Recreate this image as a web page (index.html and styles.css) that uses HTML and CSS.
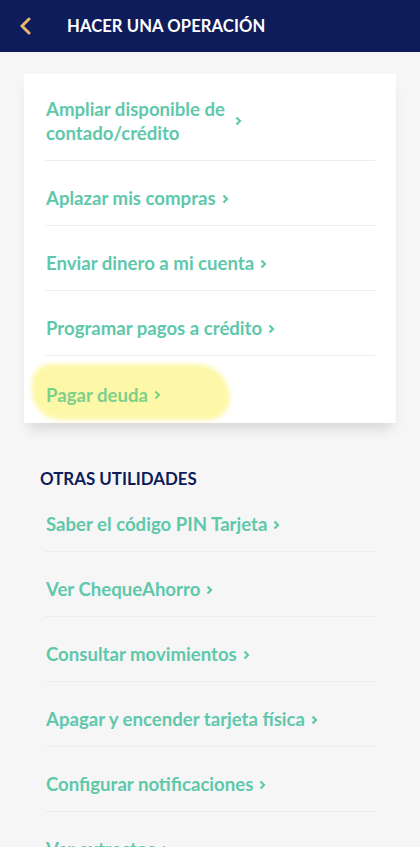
FILE: index.html
```html
<html>
	<head>
		<meta charset="utf-8">
		<link rel="stylesheet" href="styles.css">
	</head>
	<body>
		<div class="topbar">
			<svg class="back" width="14" height="18" viewBox="0 0 14 18"><path d="M10 2 L3 9 L10 16" fill="none" stroke="#e8b66a" stroke-width="3" stroke-linecap="round" stroke-linejoin="round"/></svg>
			<div class="title">HACER UNA OPERACIÓN</div>
		</div>

		<div class="card">
			<div class="item two"><span>Ampliar disponible de<br/>contado/crédito</span><svg class="chev" width="7" height="10" viewBox="0 0 7 10"><path d="M1.5 1.5 L5 5 L1.5 8.5" fill="none" stroke="currentColor" stroke-width="2.2"/></svg></div>
			<div class="item"><span>Aplazar mis compras</span><svg class="chev" width="7" height="10" viewBox="0 0 7 10"><path d="M1.5 1.5 L5 5 L1.5 8.5" fill="none" stroke="currentColor" stroke-width="2.2"/></svg></div>
			<div class="item"><span>Enviar dinero a mi cuenta</span><svg class="chev" width="7" height="10" viewBox="0 0 7 10"><path d="M1.5 1.5 L5 5 L1.5 8.5" fill="none" stroke="currentColor" stroke-width="2.2"/></svg></div>
			<div class="item"><span>Programar pagos a crédito</span><svg class="chev" width="7" height="10" viewBox="0 0 7 10"><path d="M1.5 1.5 L5 5 L1.5 8.5" fill="none" stroke="currentColor" stroke-width="2.2"/></svg></div>
			<div class="item last marked">
				<div class="highlight"></div>
				<span>Pagar deuda</span><svg class="chev" width="7" height="10" viewBox="0 0 7 10"><path d="M1.5 1.5 L5 5 L1.5 8.5" fill="none" stroke="currentColor" stroke-width="2.2"/></svg>
			</div>
		</div>

		<div class="section">OTRAS UTILIDADES</div>
		<div class="list">
			<div class="item"><span>Saber el código PIN Tarjeta</span><svg class="chev" width="7" height="10" viewBox="0 0 7 10"><path d="M1.5 1.5 L5 5 L1.5 8.5" fill="none" stroke="currentColor" stroke-width="2.2"/></svg></div>
			<div class="item"><span>Ver ChequeAhorro</span><svg class="chev" width="7" height="10" viewBox="0 0 7 10"><path d="M1.5 1.5 L5 5 L1.5 8.5" fill="none" stroke="currentColor" stroke-width="2.2"/></svg></div>
			<div class="item"><span>Consultar movimientos</span><svg class="chev" width="7" height="10" viewBox="0 0 7 10"><path d="M1.5 1.5 L5 5 L1.5 8.5" fill="none" stroke="currentColor" stroke-width="2.2"/></svg></div>
			<div class="item"><span>Apagar y encender tarjeta física</span><svg class="chev" width="7" height="10" viewBox="0 0 7 10"><path d="M1.5 1.5 L5 5 L1.5 8.5" fill="none" stroke="currentColor" stroke-width="2.2"/></svg></div>
			<div class="item"><span>Configurar notificaciones</span><svg class="chev" width="7" height="10" viewBox="0 0 7 10"><path d="M1.5 1.5 L5 5 L1.5 8.5" fill="none" stroke="currentColor" stroke-width="2.2"/></svg></div>
			<div class="item"><span>Ver extractos</span><svg class="chev" width="7" height="10" viewBox="0 0 7 10"><path d="M1.5 1.5 L5 5 L1.5 8.5" fill="none" stroke="currentColor" stroke-width="2.2"/></svg></div>
		</div>
	</body>
</html>
```

FILE: styles.css
```css
*{
	margin: 0;
	padding: 0;
	box-sizing: border-box;
}
body{
	background: #f6f6f7;
	font-family: "Lato", "Open Sans", sans-serif;
	overflow: hidden;
}
.topbar{
	height: 52px;
	background: #0e1c5c;
	display: flex;
	align-items: center;
	padding-left: 19px;
}
.back{
	margin-right: 34px;
}
.title{
	color: #fff;
	font-size: 16.6px;
	font-weight: 700;
	letter-spacing: 0.1px;
}

.card{
	margin: 22px 24px 0 24px;
	background: #fff;
	padding: 0 21px;
	box-shadow: 0 10px 12px -4px rgba(0,0,0,0.12);
}
.item{
	height: 65px;
	display: flex;
	align-items: center;
	padding-top: 10px;
	border-bottom: 1px solid #ececec;
	color: #5fc8ab;
	font-size: 18.6px;
	font-weight: 700;
	padding-left: 1px;
	position: relative;
}
.item.two{
	height: 87px;
	padding-top: 7px;
	line-height: 24px;
}
.item.last{
	border-bottom: none;
	height: 67px;
}
.chev{
	margin-left: 6px;
	margin-top: 1px;
	flex-shrink: 0;
}
.item.two .chev{
	margin-left: 10px;
	margin-top: 0;
}
.item span{
	position: relative;
}
.marked{
	color: #7fcf8c;
}
.marked .chev{
	position: relative;
}
.highlight{
	position: absolute;
	left: -13px;
	top: 8px;
	width: 198px;
	height: 56px;
	background: #fdf8a8;
	border-radius: 22px 40px 26px 34px;
	filter: blur(2px);
}

.section{
	color: #0e1c5c;
	font-size: 16.9px;
	font-weight: 700;
	margin: 47px 0 0 40px;
	height: 18px;
	line-height: 18px;
}
.list{
	margin: -1px 45px 0 45px;
}
```
